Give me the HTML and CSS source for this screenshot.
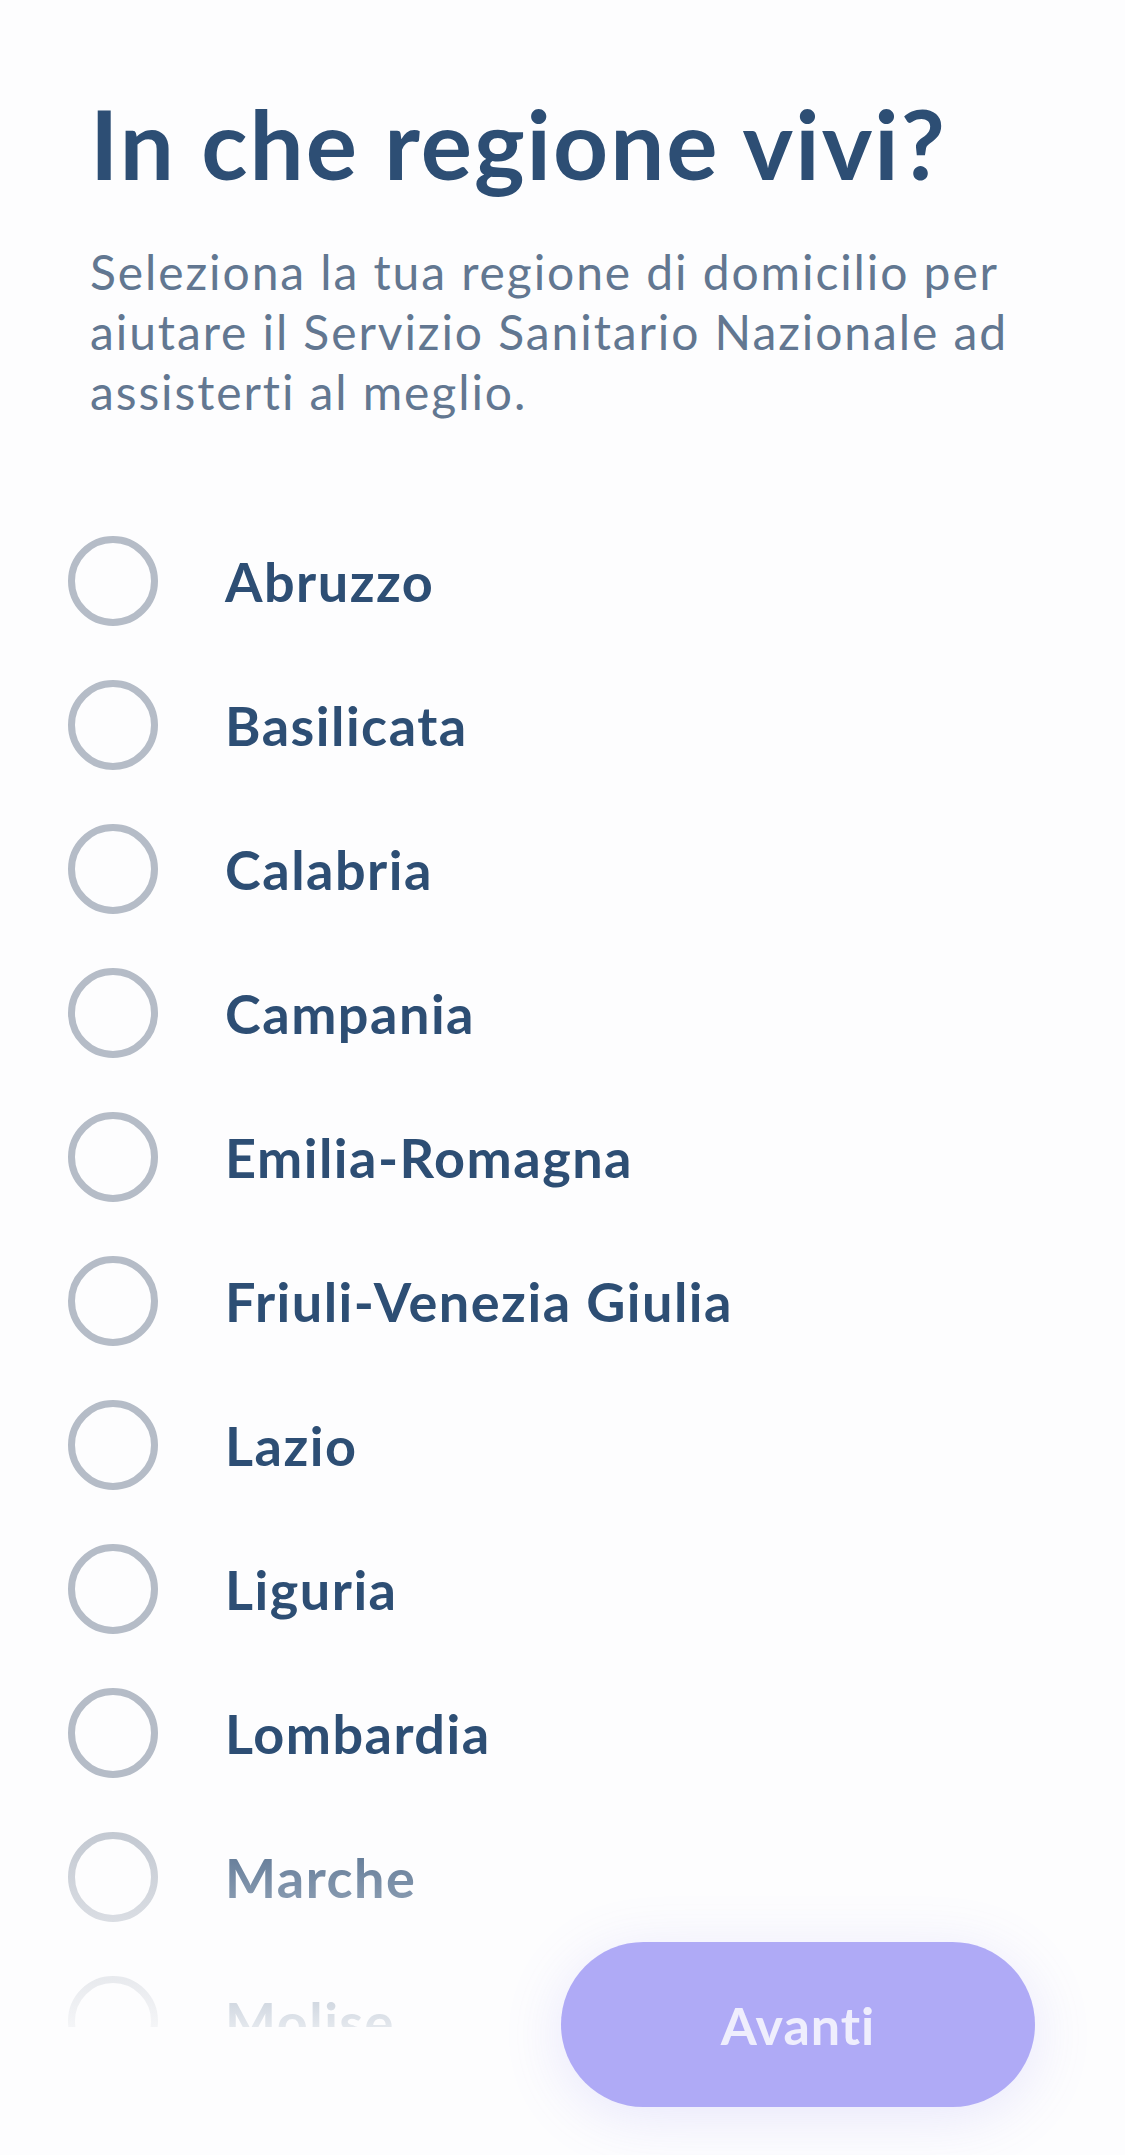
FILE: index.html
```html
<!DOCTYPE html>
<html>
    <head>
        <title>In che regione vivi?</title>
        <link rel="stylesheet" href="styles.css">
    </head>
    <body>
        <div class="page">
            <div class="intro">
                <h1 class="title">In che regione vivi?</h1>
                <p class="lead">Seleziona la tua regione di domicilio per<br>aiutare il Servizio Sanitario Nazionale ad<br>assisterti al meglio.</p>
            </div>

            <div class="listWrap">
                <ul class="regions">
                    <li><span class="radio"></span><span class="name">Abruzzo</span></li>
                    <li><span class="radio"></span><span class="name">Basilicata</span></li>
                    <li><span class="radio"></span><span class="name">Calabria</span></li>
                    <li><span class="radio"></span><span class="name">Campania</span></li>
                    <li><span class="radio"></span><span class="name">Emilia-Romagna</span></li>
                    <li><span class="radio"></span><span class="name">Friuli-Venezia Giulia</span></li>
                    <li><span class="radio"></span><span class="name">Lazio</span></li>
                    <li><span class="radio"></span><span class="name">Liguria</span></li>
                    <li><span class="radio"></span><span class="name">Lombardia</span></li>
                    <li><span class="radio"></span><span class="name">Marche</span></li>
                    <li><span class="radio"></span><span class="name">Molise</span></li>
                </ul>
            </div>

            <div class="footer"></div>

            <button class="nextButton" disabled>Avanti</button>
        </div>
    </body>
</html>
```

FILE: styles.css
```css
html, body{
    margin:0;
    padding:0;
    background-color:#fdfdfe;
}
body{
    font-family:Lato, "Noto Sans", sans-serif;
    color:#2d4e74;
}
.page{
    position:relative;
    height:100vh;
    display:flex;
    flex-direction:column;
    overflow:hidden;
}
.intro{
    padding:0 90px;
}
.title{
    margin:85px 0 0 0;
    font-size:96px;
    line-height:1.2;
    font-weight:700;
    letter-spacing:2px;
}
.lead{
    margin:42px 0 0 0;
    font-size:48px;
    line-height:60px;
    letter-spacing:1.9px;
    color:#627791;
}
.listWrap{
    position:relative;
    flex:1;
    overflow:hidden;
    margin-top:87px;
}
.listWrap::after{
    content:"";
    position:absolute;
    left:0;
    right:0;
    bottom:0;
    height:250px;
    background:linear-gradient(to bottom, rgba(253,253,254,0), rgba(253,253,254,0.88));
}
.regions{
    list-style:none;
    margin:0;
    padding:0 0 0 68px;
}
.regions li{
    display:flex;
    align-items:center;
    height:144px;
    gap:67px;
}
.radio{
    box-sizing:border-box;
    width:90px;
    height:90px;
    border:7px solid #b5bcc7;
    border-radius:50%;
    flex-shrink:0;
}
.name{
    font-size:54px;
    font-weight:700;
    letter-spacing:1.5px;
}
.footer{
    height:128px;
    flex-shrink:0;
}
.nextButton{
    position:absolute;
    right:90px;
    bottom:48px;
    width:474px;
    height:165px;
    border:none;
    border-radius:83px;
    background-color:#afaaf6;
    color:#efeefd;
    font-family:Lato, "Noto Sans", sans-serif;
    font-size:52px;
    font-weight:700;
    letter-spacing:1px;
    box-shadow:0 10px 60px rgba(120,110,235,0.16);
}
```
